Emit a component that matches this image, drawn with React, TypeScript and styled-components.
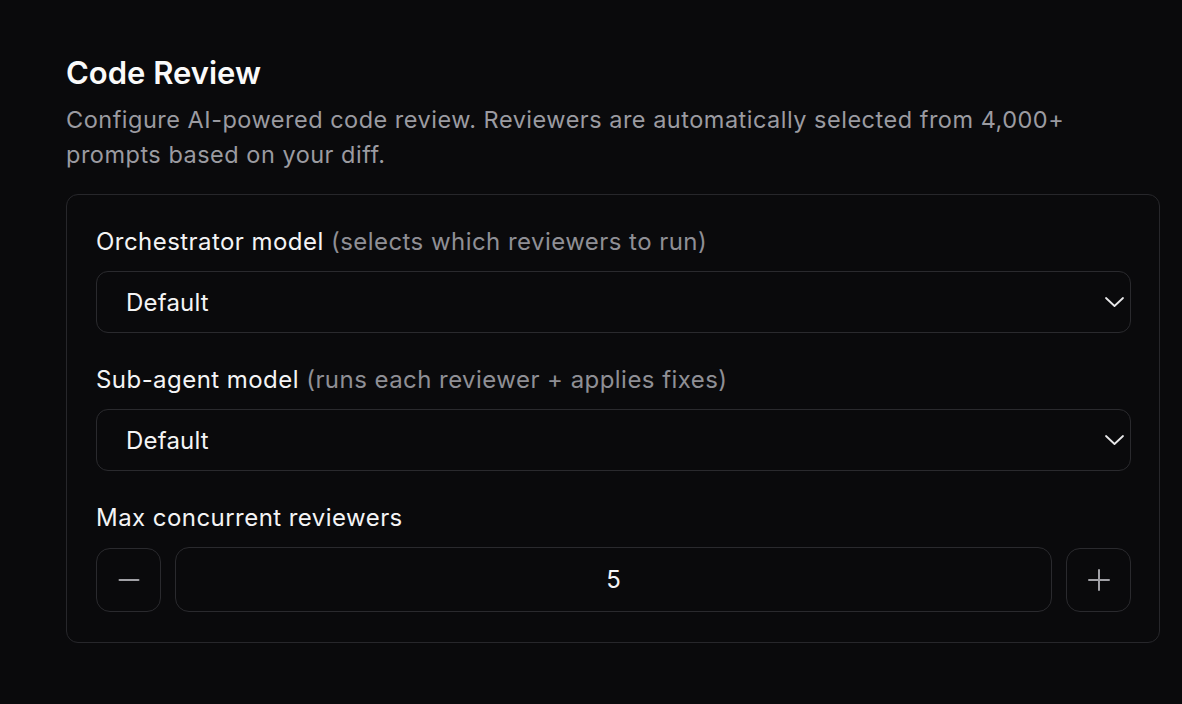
import styled, { createGlobalStyle } from "styled-components";

const GlobalStyle = createGlobalStyle`
  html, body {
    margin: 0;
    padding: 0;
    background: #0a0a0c;
    font-family: Inter, "Noto Sans", sans-serif;
    -webkit-font-smoothing: antialiased;
  }
`;

const Page = styled.div`
  box-sizing: border-box;
  width: 1182px;
  height: 704px;
  padding: 54px 22px 0 66px;
  background: #0a0a0c;
  color: #f4f4f5;
`;

const Title = styled.h1`
  margin: 0;
  font-size: 31px;
  font-weight: 600;
  line-height: 38px;
  letter-spacing: 0;
  color: #fafafa;
`;

const Description = styled.p`
  margin: 10px 0 22px;
  font-size: 23.5px;
  line-height: 35px;
  letter-spacing: 0.5px;
  color: #9b9ba1;
  max-width: 1040px;
`;

const Card = styled.section`
  box-sizing: border-box;
  border: 1px solid #27272b;
  border-radius: 12px;
  padding: 32px 28px 30px 29px;
  display: flex;
  flex-direction: column;
  gap: 32px;
`;

const Field = styled.div`
  display: flex;
  flex-direction: column;
  gap: 14px;
`;

const Label = styled.label`
  font-size: 24px;
  line-height: 30px;
  font-weight: 400;
  letter-spacing: 0.45px;
  color: #f4f4f5;
`;

const Hint = styled.span`
  color: #8f8f95;
`;

const Select = styled.div`
  box-sizing: border-box;
  height: 62px;
  border: 1px solid #2a2a2e;
  border-radius: 12px;
  display: flex;
  align-items: center;
  justify-content: space-between;
  padding: 0 1px 0 29px;
  font-size: 24px;
  letter-spacing: 0.2px;
  color: #f4f4f5;
`;

const Stepper = styled.div`
  display: flex;
  gap: 14px;
  align-items: center;
`;

const StepButton = styled.button`
  box-sizing: border-box;
  width: 65px;
  height: 64px;
  border: 1px solid #2a2a2e;
  border-radius: 14px;
  background: transparent;
  color: #a1a1a6;
  display: flex;
  align-items: center;
  justify-content: center;
  padding: 0;
  cursor: pointer;
`;

const NumberBox = styled.div`
  box-sizing: border-box;
  flex: 1;
  height: 65px;
  border: 1px solid #2a2a2e;
  border-radius: 14px;
  display: flex;
  align-items: center;
  justify-content: center;
  font-size: 24px;
  color: #f4f4f5;
`;

const Chevron = () => (
  <svg width="24" height="20" viewBox="0 0 24 20" fill="none">
    <path d="M1 6 L9.5 14 L18 6" stroke="#e8e8ea" strokeWidth="1.8" strokeLinecap="round" strokeLinejoin="round" />
  </svg>
);

const Minus = () => (
  <svg width="22" height="22" viewBox="0 0 22 22" fill="none">
    <path d="M1.5 11 H20.5" stroke="#a1a1a6" strokeWidth="2" strokeLinecap="round" />
  </svg>
);

const Plus = () => (
  <svg width="22" height="22" viewBox="0 0 22 22" fill="none">
    <path d="M1 11 H21 M11 1 V21" stroke="#a1a1a6" strokeWidth="2" strokeLinecap="round" />
  </svg>
);

function App() {
  return (
    <>
      <GlobalStyle />
      <Page>
        <Title>Code Review</Title>
        <Description>
          Configure AI-powered code review. Reviewers are automatically selected from 4,000+ prompts based on your diff.
        </Description>
        <Card>
          <Field>
            <Label>
              Orchestrator model <Hint>(selects which reviewers to run)</Hint>
            </Label>
            <Select>
              Default
              <Chevron />
            </Select>
          </Field>
          <Field>
            <Label>
              Sub-agent model <Hint>(runs each reviewer + applies fixes)</Hint>
            </Label>
            <Select>
              Default
              <Chevron />
            </Select>
          </Field>
          <Field>
            <Label>Max concurrent reviewers</Label>
            <Stepper>
              <StepButton aria-label="decrease">
                <Minus />
              </StepButton>
              <NumberBox>5</NumberBox>
              <StepButton aria-label="increase">
                <Plus />
              </StepButton>
            </Stepper>
          </Field>
        </Card>
      </Page>
    </>
  );
}

export default App;
